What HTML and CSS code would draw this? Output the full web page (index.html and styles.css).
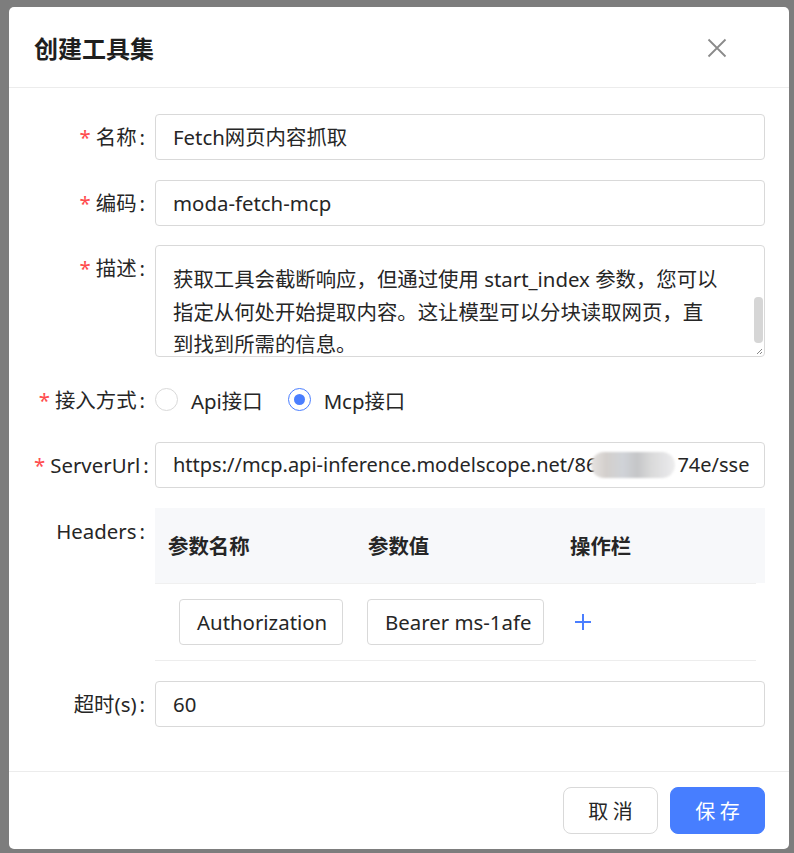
FILE: index.html
```html
<!DOCTYPE html>
<html lang="zh-CN">
<head>
<meta charset="utf-8">
<title>创建工具集</title>
<link rel="stylesheet" href="styles.css">
</head>
<body>
<div class="backdrop">
  <div class="modal">
    <div class="modal-header">
      <div class="modal-title">创建工具集</div>
      <svg class="close" width="20" height="20" viewBox="0 0 20 20"><path d="M1.5 1.5 L18.5 18.5 M18.5 1.5 L1.5 18.5" stroke="#8a8a8a" stroke-width="1.8" fill="none"/></svg>
    </div>
    <div class="modal-body">
      <div class="form-item">
        <label class="label"><span class="req">*</span>名称<span class="colon">:</span></label>
        <div class="input">Fetch网页内容抓取</div>
      </div>
      <div class="form-item">
        <label class="label"><span class="req">*</span>编码<span class="colon">:</span></label>
        <div class="input">moda-fetch-mcp</div>
      </div>
      <div class="form-item">
        <label class="label"><span class="req">*</span>描述<span class="colon">:</span></label>
        <div class="textarea">
          <div class="ta-text">获取工具会截断响应，但通过使用 start_index 参数，您可以<br>指定从何处开始提取内容。这让模型可以分块读取网页，直<br>到找到所需的信息。</div>
          <div class="ta-thumb"></div>
          <svg class="ta-grip" width="7" height="7" viewBox="0 0 7 7"><path d="M6 1 L1 6 M6 4 L4 6" stroke="#888" stroke-width="1"/></svg>
        </div>
      </div>
      <div class="form-item">
        <label class="label"><span class="req">*</span>接入方式<span class="colon">:</span></label>
        <div class="radios">
          <span class="radio"><span class="radio-circle"></span>Api接口</span>
          <span class="radio"><span class="radio-circle checked"></span>Mcp接口</span>
        </div>
      </div>
      <div class="form-item">
        <label class="label"><span class="req">*</span>ServerUrl<span class="colon">:</span></label>
        <div class="input url">https://mcp.api-inference.modelscope.net/86<span class="blur"></span>74e/sse</div>
      </div>
      <div class="form-item">
        <label class="label">Headers<span class="colon">:</span></label>
        <div class="table">
          <div class="thead">
            <div class="th">参数名称</div>
            <div class="th">参数值</div>
            <div class="th">操作栏</div>
          </div>
          <div class="trow">
            <div class="td td-first"><div class="cell-input w1">Authorization</div></div>
            <div class="td"><div class="cell-input w2">Bearer ms-1afe</div></div>
            <div class="td"><svg class="plus" width="18" height="18" viewBox="0 0 18 18"><path d="M9 1 V17 M1 9 H17" stroke="#4a7eff" stroke-width="2"/></svg></div>
          </div>
        </div>
      </div>
      <div class="form-item last">
        <label class="label">超时(s)<span class="colon">:</span></label>
        <div class="input">60</div>
      </div>
    </div>
    <div class="modal-footer">
      <button class="btn">取 消</button>
      <button class="btn primary">保 存</button>
    </div>
  </div>
</div>
</body>
</html>
```
FILE: styles.css
```css
html, body {
  margin: 0;
  padding: 0;
}
body {
  width: 794px;
  height: 853px;
  overflow: hidden;
  background: #7d7d7d;
  font-family: "Noto Sans", "Noto Sans CJK SC", sans-serif;
  color: #262626;
}
.backdrop {
  padding: 7px 5px 0 9px;
}
.modal {
  width: 780px;
  height: 842px;
  background: #fff;
  border-radius: 5px;
  display: flex;
  flex-direction: column;
  box-sizing: border-box;
}
.modal-header {
  height: 81px;
  box-sizing: border-box;
  border-bottom: 1px solid #ececec;
  padding: 0 62px 0 25px;
  display: flex;
  align-items: center;
  justify-content: space-between;
}
.modal-title {
  font-size: 24px;
  font-weight: 700;
  color: #1f1f1f;
  font-family: "Noto Sans CJK SC", sans-serif;
}
.close {
  display: block;
  margin-top: 2px;
}
.modal-body {
  flex: 1;
  padding: 26px 24px 0 25px;
}
.form-item {
  display: grid;
  grid-template-columns: 121px 1fr;
  margin-bottom: 19.6px;
  font-size: 20.4px;
}
.form-item.last {
  margin-bottom: 0;
}
.label {
  height: 46px;
  line-height: 46px;
  text-align: right;
  color: #262626;
  white-space: nowrap;
}
.req {
  color: #ff4d4f;
  margin-right: 5px;
  font-family: "Noto Sans", sans-serif;
}
.colon {
  margin: 0 10px 0 3px;
}
.input {
  height: 46px;
  line-height: 44px;
  box-sizing: border-box;
  border: 1px solid #d9d9d9;
  border-radius: 4px;
  padding: 0 17px;
  white-space: nowrap;
  overflow: hidden;
  color: #262626;
}
.input.url {
  font-size: 20px;
}
.blur {
  display: inline-block;
  width: 84px;
  height: 26px;
  vertical-align: -6px;
  margin-left: -6px;
  margin-right: 2px;
  border-radius: 13px;
  background: linear-gradient(90deg, #e6e3e1 0%, #d3cfcc 18%, #d0d3d8 38%, #c5c6c8 55%, #dadada 72%, #e4e4e6 88%, #eeeeee 100%);
  filter: blur(1.2px);
}
.textarea {
  position: relative;
  height: 112px;
  box-sizing: border-box;
  border: 1px solid #d9d9d9;
  border-radius: 4px;
  padding: 18px 17px 0 17px;
}
.ta-text {
  line-height: 32.5px;
  white-space: nowrap;
  margin-top: -1px;
}
.ta-thumb {
  position: absolute;
  right: 1px;
  top: 51px;
  width: 9px;
  height: 46px;
  border-radius: 4px;
  background: #d6d6d6;
}
.ta-grip {
  position: absolute;
  right: 1px;
  bottom: 1px;
}
.radios {
  height: 46px;
  display: flex;
  align-items: center;
}
.radio {
  display: flex;
  align-items: center;
  margin-right: 25px;
}
.radio-circle {
  width: 23px;
  height: 23px;
  box-sizing: border-box;
  border: 1px solid #d9d9d9;
  border-radius: 50%;
  margin-right: 13px;
  position: relative;
}
.radio-circle.checked {
  border-color: #4a7eff;
}
.radio-circle.checked::after {
  content: "";
  position: absolute;
  left: 5px;
  top: 5px;
  width: 11px;
  height: 11px;
  border-radius: 50%;
  background: #4a7eff;
}
.thead {
  display: grid;
  grid-template-columns: 200px 202px 1fr;
  height: 75px;
  align-items: center;
  background: #f7f8fa;
  font-weight: 700;
  color: #262626;
}
.th {
  padding-left: 13px;
}
.trow {
  display: grid;
  grid-template-columns: 212px 202px 1fr;
  height: 78px;
  box-sizing: border-box;
  align-items: center;
  border-top: 1px solid #f0f0f0;
  border-bottom: 1px solid #ededed;
  margin-right: 9px;
}
.td-first {
  padding-left: 24px;
}
.cell-input {
  height: 46px;
  line-height: 44px;
  box-sizing: border-box;
  border: 1px solid #d9d9d9;
  border-radius: 4px;
  padding-left: 17px;
  white-space: nowrap;
  overflow: hidden;
}
.w1 { width: 164px; }
.w2 { width: 177px; }
.plus {
  display: block;
  margin-left: 5px;
}
.modal-footer {
  border-top: 1px solid #ececec;
  padding: 15px 24px 15px 0;
  display: flex;
  justify-content: flex-end;
  gap: 12px;
}
.btn {
  width: 95px;
  height: 47px;
  border-radius: 8px;
  border: 1px solid #d9d9d9;
  background: #fff;
  font-family: "Noto Sans CJK SC", sans-serif;
  font-size: 20px;
  color: #262626;
  padding: 0;
  box-sizing: border-box;
}
.btn.primary {
  background: #477eff;
  border-color: #477eff;
  color: #fff;
}
```
